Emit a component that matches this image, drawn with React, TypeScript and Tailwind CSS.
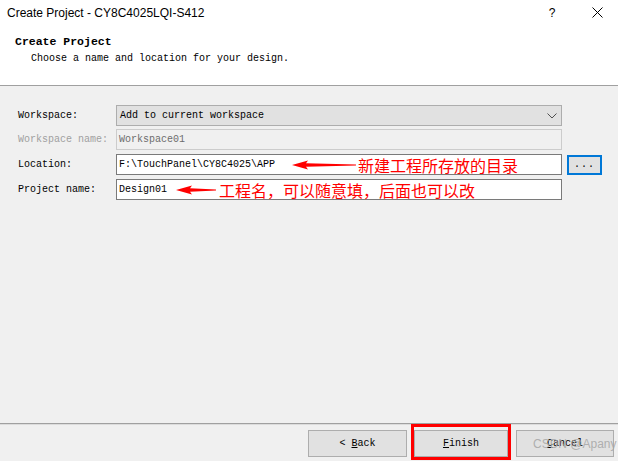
import React from 'react';

const mono = { fontFamily: '"Liberation Mono", monospace' };

function LeftArrow({ width }: { width: number }) {
  // tapered red arrow pointing left
  return (
    <svg width={width} height="10" viewBox={`0 0 ${width} 10`} className="shrink-0">
      <polygon
        points={`0,5 16,0.5 14,3.3 ${width},4.4 ${width},5.6 14,6.7 16,9.5`}
        fill="#ff0000"
      />
    </svg>
  );
}

function Row({
  label,
  disabled,
  children,
  className = '',
}: {
  label: string;
  disabled?: boolean;
  children: React.ReactNode;
  className?: string;
}) {
  return (
    <div className={`flex items-center h-[21px] ${className}`}>
      <div className={`w-[98px] shrink-0 ${disabled ? 'text-[#a0a0a0]' : 'text-black'}`}>{label}</div>
      {children}
    </div>
  );
}

export default function App() {
  return (
    <div
      className="relative w-[618px] h-[461px] bg-[#f0f0f0] flex flex-col overflow-hidden text-[10px] leading-[14px]"
      style={mono}
    >
      {/* header */}
      <div className="bg-white h-[86px] border-b border-[#a0a0a0] shrink-0">
        <div
          className="h-[25px] flex items-center pl-[7px] text-[12px] text-black"
          style={{ fontFamily: '"Liberation Sans", Arial, sans-serif' }}
        >
          <span className="flex-1">Create Project - CY8C4025LQI-S412</span>
          <span className="w-[12px] text-center mr-[34px]">?</span>
          <svg width="11" height="11" viewBox="0 0 11 11" className="mr-[15px]">
            <path d="M0.5 0.5 L10.5 10.5 M10.5 0.5 L0.5 10.5" stroke="#000" strokeWidth="1" />
          </svg>
        </div>
        <div className="mt-[10px] pl-[15px] text-[11.5px] font-bold text-black">Create Project</div>
        <div className="mt-[3px] pl-[31px] text-black">Choose a name and location for your design.</div>
      </div>

      {/* form */}
      <div className="flex-1 pt-[19px] pl-[18px]">
        <Row label="Workspace:">
          <div className="w-[446px] h-[21px] bg-[#e1e1e1] border border-[#adadad] flex items-center pl-[3px] pr-[3px]">
            <span className="flex-1">Add to current workspace</span>
            <svg width="10" height="6" viewBox="0 0 10 6" className="mr-[1px]">
              <path d="M0.5 0.5 L5 5 L9.5 0.5" fill="none" stroke="#505050" strokeWidth="1" />
            </svg>
          </div>
        </Row>
        <Row label="Workspace name:" disabled className="mt-[3px]">
          <div className="w-[446px] h-[21px] bg-[#f0f0f0] border border-[#cccccc] flex items-center pl-[2px] text-[#6d6d6d]">
            Workspace01
          </div>
        </Row>
        <Row label="Location:" className="mt-[4px]">
          <div className="w-[446px] h-[21px] bg-white border border-[#7a7a7a] flex items-center pl-[2px]">
            <span>F:\TouchPanel\CY8C4025\APP</span>
            <div className="ml-[17px]">
              <LeftArrow width={64} />
            </div>
            <span
              className="ml-[2px] text-[16px] leading-none text-[#ff0000]"
              style={{ fontFamily: '"Noto Sans CJK SC", sans-serif' }}
            >
              新建工程所存放的目录
            </span>
          </div>
          <button className="ml-[5px] w-[35px] h-[20px] bg-[#e1e1e1] border-2 border-[#0078d7] flex items-center justify-center tracking-[1px]">
            ...
          </button>
        </Row>
        <Row label="Project name:" className="mt-[4px]">
          <div className="w-[446px] h-[21px] bg-white border border-[#7a7a7a] flex items-center pl-[2px]">
            <span>Design01</span>
            <div className="ml-[9px]">
              <LeftArrow width={40} />
            </div>
            <span
              className="ml-[3px] text-[16px] leading-none text-[#ff0000]"
              style={{ fontFamily: '"Noto Sans CJK SC", sans-serif' }}
            >
              工程名，可以随意填，后面也可以改
            </span>
          </div>
        </Row>
      </div>

      {/* footer */}
      <div className="h-[38px] shrink-0 border-t border-[#a0a0a0] shadow-[inset_0_1px_0_#dcdcdc] flex items-start justify-end pr-[4px]">
        <button className="mt-[6px] w-[99px] h-[27px] bg-[#e1e1e1] border border-[#adadad] flex items-center justify-center">
          &lt;&nbsp;<span className="underline">B</span>ack
        </button>
        <div className="ml-[4px] w-[100px] h-[36px] border-[3px] border-[#ff0000] pt-[3px]">
          <button className="w-full h-[27px] bg-[#e1e1e1] border border-[#adadad] flex items-center justify-center">
            <span className="underline">F</span>inish
          </button>
        </div>
        <button className="ml-[5px] mt-[6px] w-[98px] h-[27px] bg-[#e1e1e1] border border-[#adadad] flex items-center justify-center">
          <span className="underline">C</span>ancel
        </button>
      </div>

      {/* watermark */}
      <div
        className="absolute left-[533px] top-[437px] text-[12px] text-[#a8a8a8]/90"
        style={{ fontFamily: '"Liberation Sans", Arial, sans-serif' }}
      >
        CSDN @Apany
      </div>
    </div>
  );
}
